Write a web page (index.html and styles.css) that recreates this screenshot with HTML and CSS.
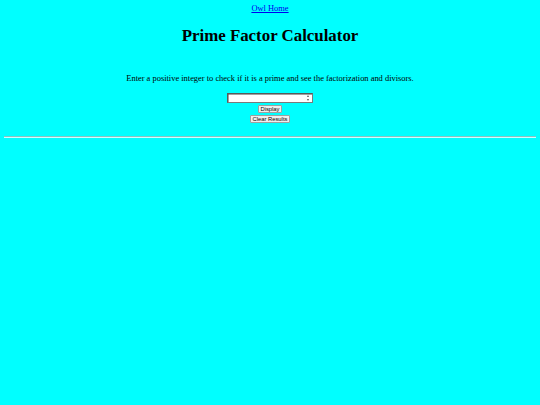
FILE: index.html
```html
<!DOCTYPE html>
<html>
<head>
<meta charset="utf-8">
<title>Prime Factor Calculator</title>
<link rel="stylesheet" href="styles.css">
</head>
<body class="page">
<div class="top"><a class="home" href="#">Owl Home</a></div>
<h1 class="title">Prime Factor Calculator</h1>
<div class="spacer"></div>
<p class="intro">Enter a positive integer to check if it is a prime and see the factorization and divisors.</p>
<form class="calc">
  <span class="numbox"><span class="spin"><span class="up"></span><span class="down"></span></span></span>
  <button type="button" class="btn">Display</button>
  <button type="button" class="btn">Clear Results</button>
</form>
<hr class="rule">
</body>
</html>
```
FILE: styles.css
```css
html { background: #00ffff; }
.page {
  margin: 4px 4.2px;
  background: #00ffff;
  font-family: "Liberation Serif", "Times New Roman", serif;
  font-size: 8.44px;
  line-height: 9.7px;
  color: #000;
}
.top { text-align: center; }
.home { color: #0000ee; text-decoration: underline; }
.title {
  text-align: center;
  font-size: 16.875px;
  line-height: 19.5px;
  font-weight: bold;
  margin: 12.3px 0 11.3px;
}
.spacer { height: 17.3px; }
.intro { text-align: center; margin: 0 0 8.4px; }
.calc {
  display: flex;
  flex-direction: column;
  align-items: center;
  margin: 0 0 13px;
  padding-top: 0.5px;
}
.numbox {
  display: block;
  box-sizing: border-box;
  width: 86px;
  height: 10.7px;
  background: #fff;
  border: 1px solid #5a5a5a;
  border-right-color: #7a7a7a;
  border-bottom-color: #7a7a7a;
  box-shadow: inset 0.5px 0.5px 0 #444;
  position: relative;
}
.spin {
  position: absolute;
  right: 1.5px;
  top: 1.6px;
  width: 3.5px;
  height: 5.5px;
}
.up, .down {
  position: absolute;
  left: 0;
  width: 0; height: 0;
  border-left: 1.75px solid transparent;
  border-right: 1.75px solid transparent;
}
.up { top: 0; border-bottom: 2px solid #555; }
.down { bottom: 0; border-top: 2px solid #555; }
.btn {
  font-family: "Liberation Sans", Arial, sans-serif;
  font-size: 5.8px;
  line-height: 6px;
  padding: 0 1.6px;
  height: 8px;
  box-sizing: border-box;
  background: #efefef;
  border: 1px solid #a0a0a0;
  border-radius: 1px;
  color: #000;
}
.numbox + .btn { margin-top: 1.5px; }
.btn + .btn { margin-top: 2px; }
.rule {
  margin: 4.2px 0;
  border: 0;
  border-top: 1px solid #8fc0c0;
  border-bottom: 1px solid #c8ffff;
  height: 0;
}
```
